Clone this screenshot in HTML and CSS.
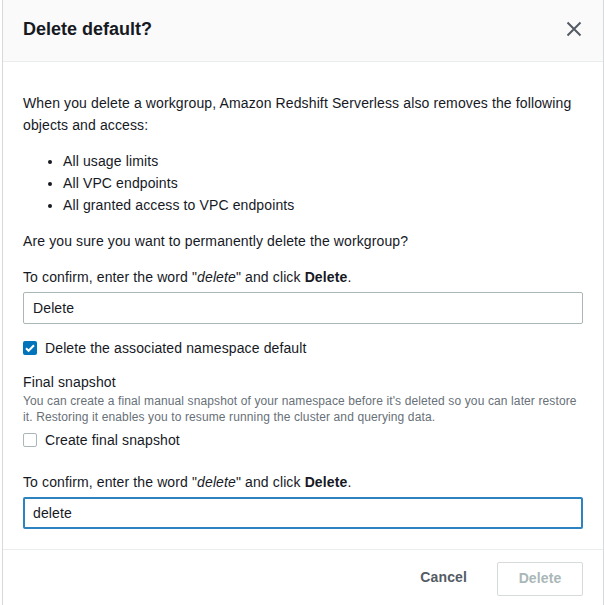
FILE: index.html
```html
<!DOCTYPE html>
<html lang="en">
<head>
  <meta charset="UTF-8">
  <meta name="viewport" content="width=device-width, initial-scale=1.0">
  <title>Delete default?</title>
  <link rel="stylesheet" href="styles.css">
</head>
<body>
  <div class="modal">
    <!-- Cabeçalho -->
    <div class="modal-header">
      <h2>Delete default?</h2>
      <button class="close" aria-label="Close">
        <svg width="16" height="16" viewBox="0 0 16 16">
          <path d="M1.5 1.5l13 13M14.5 1.5l-13 13" stroke="#545b64" stroke-width="2" fill="none"/>
        </svg>
      </button>
    </div>

    <!-- Conteúdo -->
    <div class="modal-body">
      <p>When you delete a workgroup, Amazon Redshift Serverless also removes the following objects and access:</p>
      <ul>
        <li>All usage limits</li>
        <li>All VPC endpoints</li>
        <li>All granted access to VPC endpoints</li>
      </ul>
      <p>Are you sure you want to permanently delete the workgroup?</p>

      <label class="field-label">To confirm, enter the word "<em>delete</em>" and click <strong>Delete</strong>.</label>
      <input type="text" class="text-input" value="Delete">

      <label class="check-row">
        <span class="box checked">
          <svg width="14" height="14" viewBox="0 0 14 14">
            <path d="M3 7.2l2.6 2.6L11 4.2" stroke="#fff" stroke-width="2" fill="none"/>
          </svg>
        </span>
        Delete the associated namespace default
      </label>

      <div class="snapshot">
        <div class="snapshot-title">Final snapshot</div>
        <div class="snapshot-desc">You can create a final manual snapshot of your namespace before it's deleted so you can later restore it. Restoring it enables you to resume running the cluster and querying data.</div>
        <label class="check-row tight">
          <span class="box"></span>
          Create final snapshot
        </label>
      </div>

      <label class="field-label second">To confirm, enter the word "<em>delete</em>" and click <strong>Delete</strong>.</label>
      <input type="text" class="text-input focused" value="delete">
    </div>

    <!-- Rodapé -->
    <div class="modal-footer">
      <button class="btn-link">Cancel</button>
      <button class="btn-primary" disabled>Delete</button>
    </div>
  </div>
</body>
</html>
```

FILE: styles.css
```css
/* Base */
body {
  margin: 0;
  background: #fff;
  font-family: "Liberation Sans", Arial, sans-serif;
  font-size: 14px;
  line-height: 22px;
  letter-spacing: 0.12px;
  color: #16191f;
}

.modal {
  margin-left: 2px;
  width: 600px;
  border-left: 1px solid #d5dbdb;
  border-right: 1px solid #d5dbdb;
  background: #fff;
}

/* Cabeçalho */
.modal-header {
  height: 61px;
  background: #fafafa;
  border-bottom: 1px solid #eaeded;
  padding: 0 20px;
  display: flex;
  align-items: center;
  justify-content: space-between;
}

.modal-header h2 {
  margin: 0;
  font-size: 18px;
  font-weight: bold;
  line-height: 22px;
  letter-spacing: 0;
  padding-bottom: 3px;
}

.close {
  border: none;
  background: none;
  padding: 0;
  margin-right: 1px;
  margin-bottom: 3px;
  display: flex;
  cursor: pointer;
}

/* Conteúdo */
.modal-body {
  padding: 30px 20px 20px;
}

.modal-body p {
  margin: 0 0 14px;
}

.modal-body ul {
  margin: 0 0 14px;
  padding-left: 40px;
}

.field-label {
  display: block;
  margin-top: 14px;
  margin-bottom: 4px;
}

.field-label.second {
  margin-top: 20px;
}

.text-input {
  display: block;
  box-sizing: border-box;
  width: 100%;
  height: 32px;
  margin: 0;
  padding: 0 9px;
  border: 1px solid #aab7b8;
  border-radius: 2px;
  font-family: inherit;
  font-size: 14px;
  letter-spacing: inherit;
  color: #16191f;
  background: #fff;
  outline: none;
}

.text-input.focused {
  border: 2px solid #2d83c0;
  padding: 0 8px;
}

.check-row {
  display: flex;
  align-items: center;
  gap: 8px;
  margin-top: 13px;
}

.check-row.tight {
  margin-top: 4px;
}

.box {
  box-sizing: border-box;
  width: 14px;
  height: 14px;
  border: 1px solid #aab7b8;
  border-radius: 2px;
  background: #fff;
  display: flex;
}

.box.checked {
  border: none;
  background: #0073bb;
}

/* Snapshot */
.snapshot {
  margin-top: 12px;
}

.snapshot-desc {
  font-size: 12px;
  line-height: 16px;
  color: #687078;
}

/* Rodapé */
.modal-footer {
  border-top: 1px solid #eaeded;
  padding: 12px 20px 14px;
  display: flex;
  justify-content: flex-end;
  align-items: center;
  gap: 10px;
}

.btn-link {
  border: none;
  background: none;
  font-family: inherit;
  font-size: 14px;
  font-weight: bold;
  letter-spacing: inherit;
  color: #545b64;
  padding: 4px 20px 8px;
}

.btn-primary {
  box-sizing: border-box;
  height: 34px;
  width: 86px;
  padding-bottom: 3px;
  border: 1px solid #d5dbdb;
  border-radius: 2px;
  background: #fff;
  font-family: inherit;
  font-size: 14px;
  font-weight: bold;
  letter-spacing: inherit;
  color: #aab7b8;
}
```
